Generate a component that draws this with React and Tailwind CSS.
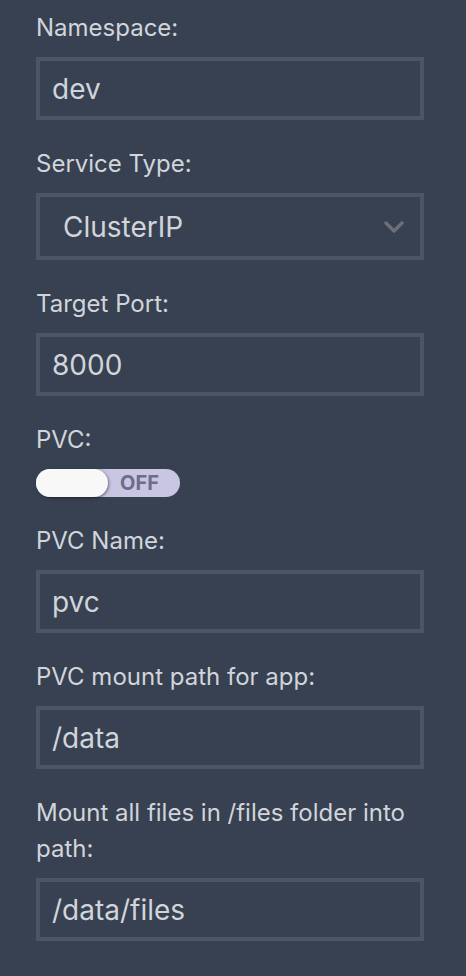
import React from "react";

function Label({ children }) {
  return (
    <div className="text-[24px] leading-[36px] text-[#d1d5db]">{children}</div>
  );
}

function TextBox({ value }) {
  return (
    <div className="mt-[11px] flex h-[63px] w-[388px] items-center border-4 border-[#4b5563] bg-[#374151] px-3 text-[28px] text-[#d1d5db]">
      {value}
    </div>
  );
}

function Field({ label, value }) {
  return (
    <div className="flex flex-col">
      <Label>{label}</Label>
      <TextBox value={value} />
    </div>
  );
}

export default function App() {
  return (
    <div
      className="min-h-[976px] w-[466px] bg-[#374151] pl-9 pt-[10px]"
      style={{ fontFamily: "Inter, 'Noto Sans', sans-serif" }}
    >
      <div className="flex w-[388px] flex-col gap-[26px]">
        <Field label="Namespace:" value="dev" />

        <div className="flex flex-col">
          <Label>Service Type:</Label>
          <div className="mt-[11px] flex h-[67px] w-[388px] items-center justify-between border-4 border-[#4b5563] pl-[23px] pr-4 text-[28px] text-[#d1d5db]">
            <span>ClusterIP</span>
            <svg width="20" height="12" viewBox="0 0 20 12" fill="none">
              <path
                d="M2 2 L10 10 L18 2"
                stroke="#6b6f76"
                strokeWidth="3.5"
                strokeLinecap="round"
                strokeLinejoin="round"
              />
            </svg>
          </div>
        </div>

        <Field label="Target Port:" value="8000" />

        <div className="flex flex-col">
          <Label>PVC:</Label>
          <div className="relative mt-[11px] flex h-[28px] w-[144px] items-center rounded-full bg-[#c8c6e2]">
            <div className="h-[28px] w-[72px] rounded-full bg-[#f8f8f8] shadow-[1px_1px_3px_rgba(0,0,0,0.45)]" />
            <span className="ml-[12px] text-[20px] font-bold leading-none text-[#6e6c88]">
              OFF
            </span>
          </div>
        </div>

        <Field label="PVC Name:" value="pvc" />
        <Field label="PVC mount path for app:" value="/data" />
        <Field
          label="Mount all files in /files folder into path:"
          value="/data/files"
        />
      </div>
    </div>
  );
}
